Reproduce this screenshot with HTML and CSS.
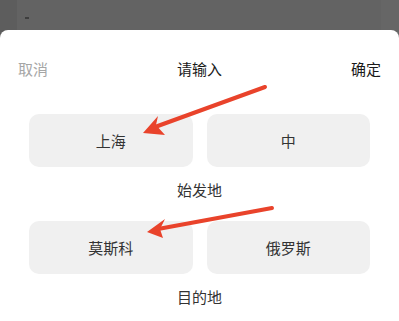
FILE: index.html
```html
<!DOCTYPE html>
<html lang="zh">
<head>
<meta charset="utf-8">
<link rel="stylesheet" href="styles.css">
</head>
<body>
<div class="backdrop">
  <div class="strip strip-left"><span class="dash"></span></div>
  <div class="strip strip-mid"></div>
  <div class="strip strip-right"></div>
</div>
<div class="sheet">
  <div class="header">
    <span class="cancel">取消</span>
    <span class="title">请输入</span>
    <span class="confirm">确定</span>
  </div>
  <div class="section">
    <div class="row">
      <div class="btn">上海</div>
      <div class="btn">中</div>
    </div>
    <div class="label">始发地</div>
  </div>
  <div class="section">
    <div class="row">
      <div class="btn">莫斯科</div>
      <div class="btn">俄罗斯</div>
    </div>
    <div class="label">目的地</div>
  </div>
</div>
<div class="watermark wm1">mfunz.com</div>
<svg class="arrows" width="399" height="321" viewBox="0 0 399 321">
  <line x1="265" y1="87" x2="155" y2="127" stroke="#e9432b" stroke-width="4" stroke-linecap="round"/>
  <polygon points="143,133 158,116 156,125 165,135" fill="#e9432b"/>
  <line x1="272" y1="208" x2="158" y2="229" stroke="#e9432b" stroke-width="4" stroke-linecap="round"/>
  <polygon points="147,232 165,219 160,229 163,238" fill="#e9432b"/>
</svg>
</body>
</html>
```
FILE: styles.css
```css
html, body {
  margin: 0;
  padding: 0;
  background: #ffffff;
}
body {
  width: 399px;
  height: 321px;
  overflow: hidden;
  position: relative;
  font-family: "Noto Sans CJK SC", "Noto Sans", sans-serif;
}
.backdrop {
  display: flex;
  height: 38px;
  margin-bottom: -8px;
}
.strip {
  height: 100%;
}
.strip-left {
  width: 17px;
  background: #5d5d5d;
  position: relative;
}
.strip-mid {
  flex: 1;
  background: #636363;
}
.strip-right {
  width: 18px;
  background: #666666;
}
.dash {
  position: absolute;
  left: 25px;
  top: 17px;
  width: 4px;
  height: 2px;
  background: #3e3e3e;
}
.sheet {
  position: relative;
  background: #ffffff;
  border-radius: 8px 8px 0 0;
  padding-top: 29px;
  height: 262px;
}
.header {
  display: flex;
  justify-content: space-between;
  align-items: center;
  padding: 0 18px;
  height: 20px;
  font-size: 15px;
  line-height: 20px;
}
.cancel {
  color: #a6a6a6;
}
.title {
  color: #1a1a1a;
}
.confirm {
  color: #1a1a1a;
}
.section {
  padding: 0 29px;
}
.section + .section {
  margin-top: 21px;
}
.header + .section {
  margin-top: 35px;
}
.row {
  display: flex;
  gap: 14px;
}
.btn {
  flex: 1;
  height: 53px;
  border-radius: 10px;
  background: #f0f0f0;
  color: #333333;
  font-size: 15px;
  display: flex;
  align-items: center;
  justify-content: center;
}
.label {
  margin-top: 13px;
  text-align: center;
  font-size: 15px;
  line-height: 20px;
  color: #333333;
}
.watermark {
  position: absolute;
  font-family: "Liberation Sans", sans-serif;
  font-weight: bold;
  font-size: 26px;
  color: rgba(0, 0, 0, 0.025);
  transform-origin: left bottom;
}
.wm1 {
  left: 30px;
  top: 110px;
  transform: rotate(-30deg);
}
.arrows {
  position: absolute;
  left: 0;
  top: 0;
}
```
